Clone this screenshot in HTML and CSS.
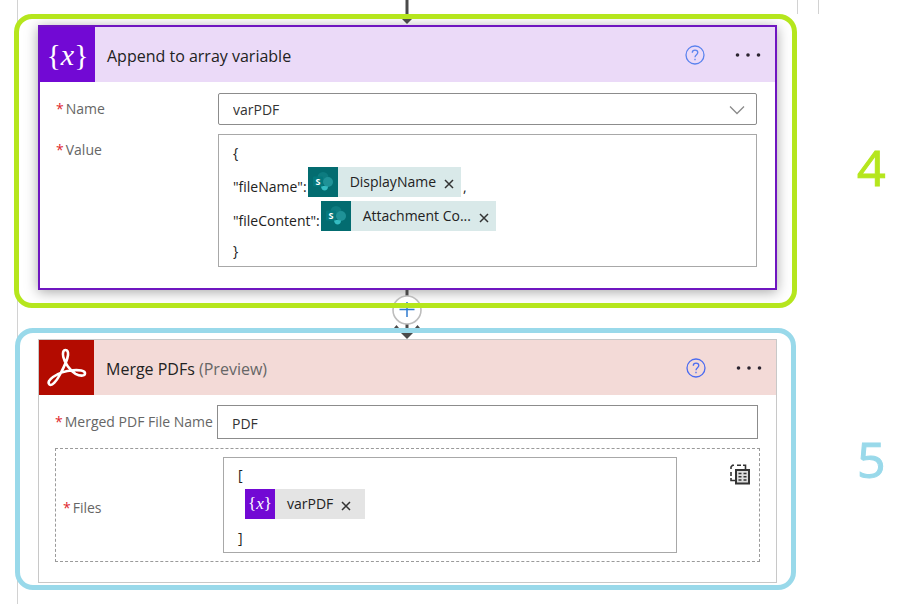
FILE: index.html
```html
<!DOCTYPE html>
<html lang="en">

<head>
    <meta charset="UTF-8">
    <meta name="viewport" content="width=device-width, initial-scale=1.0">
    <title>Flow steps</title>
    <link rel="stylesheet" href="styles.css">
</head>

<body>
    <main class="flow">
        <div class="connector top">
            <svg class="arrow" width="30" height="24" viewBox="0 0 30 24">
                <path d="M15 0V18" stroke="#4a4a4a" stroke-width="3" />
                <path d="M8 17H22L15 24Z" fill="#4a4a4a" />
            </svg>
            <div class="rails"></div>
        </div>

        <section class="step">
            <div class="frame green">
                <article class="card selected">
                    <header class="card-header purple">
                        <span class="tile variable">{<i>x</i>}</span>
                        <h2>Append to array variable</h2>
                        <button class="icon-btn" type="button" aria-label="Help">
                            <svg width="20" height="20" viewBox="0 0 20 20" fill="none" stroke="#5b83ee" stroke-width="1.3">
                                <circle cx="10" cy="10" r="9" />
                                <path d="M7.3 7.8C7.3 6.2 8.4 5.2 10 5.2S12.8 6.2 12.8 7.6C12.8 9.6 10 9.8 10 12.2" />
                                <path d="M10 13.8V15.3" />
                            </svg>
                        </button>
                        <button class="icon-btn" type="button" aria-label="More">
                            <svg width="26" height="20" viewBox="0 0 26 20" fill="#2b2430">
                                <circle cx="2.5" cy="10" r="1.8" />
                                <circle cx="13" cy="10" r="1.8" />
                                <circle cx="23.5" cy="10" r="1.8" />
                            </svg>
                        </button>
                    </header>
                    <div class="card-body">
                        <div class="field">
                            <label for="name"><span class="req">*</span>Name</label>
                            <div class="select-wrap">
                                <select id="name">
                                    <option>varPDF</option>
                                </select>
                                <svg class="chevron" width="16" height="10" viewBox="0 0 16 10" fill="none" stroke="#8a8a8a" stroke-width="1.3">
                                    <path d="M1 1.5L8 8.5L15 1.5" />
                                </svg>
                            </div>
                        </div>
                        <div class="field start">
                            <span class="label" id="value-label"><span class="req">*</span>Value</span>
                            <div class="editor" role="textbox" aria-multiline="true" aria-labelledby="value-label">
                                <div class="line">{</div>
                                <div class="line">"fileName":
                                    <span class="token teal">
                                        <svg class="token-icon" width="30" height="30" viewBox="0 0 30 30">
                                            <rect width="30" height="30" fill="#036c70" />
                                            <circle cx="15" cy="10.5" r="5.5" fill="#0d7c80" />
                                            <circle cx="20" cy="15" r="5" fill="#1f9297" />
                                            <path d="M13 19H17L20 19.500C20 22 18.500 23.500 16.500 23.500C15 23.500 13 22 13 19Z" fill="#35bcc2" />
                                            <rect x="5" y="9.5" width="10" height="10" rx="1" fill="#03787c" />
                                            <text x="10" y="18" class="s-mark">S</text>
                                        </svg>
                                        <span class="token-name">DisplayName</span>
                                        <button class="remove" type="button" aria-label="Remove DisplayName">
                                            <svg width="10" height="10" viewBox="0 0 10 10" stroke="#333" stroke-width="1.5"><path d="M1 1L9 9M9 1L1 9" /></svg>
                                        </button>
                                    </span>
                                    <span class="comma">,</span>
                                </div>
                                <div class="line">"fileContent":
                                    <span class="token teal">
                                        <svg class="token-icon" width="30" height="30" viewBox="0 0 30 30">
                                            <rect width="30" height="30" fill="#036c70" />
                                            <circle cx="15" cy="10.5" r="5.5" fill="#0d7c80" />
                                            <circle cx="20" cy="15" r="5" fill="#1f9297" />
                                            <path d="M13 19H17L20 19.500C20 22 18.500 23.500 16.500 23.500C15 23.500 13 22 13 19Z" fill="#35bcc2" />
                                            <rect x="5" y="9.5" width="10" height="10" rx="1" fill="#03787c" />
                                            <text x="10" y="18" class="s-mark">S</text>
                                        </svg>
                                        <span class="token-name">Attachment Co...</span>
                                        <button class="remove" type="button" aria-label="Remove Attachment Content">
                                            <svg width="10" height="10" viewBox="0 0 10 10" stroke="#333" stroke-width="1.5"><path d="M1 1L9 9M9 1L1 9" /></svg>
                                        </button>
                                    </span>
                                </div>
                                <div class="line last">}</div>
                            </div>
                        </div>
                    </div>
                </article>
            </div>
            <p class="number green-text">4</p>
        </section>

        <div class="connector middle">
            <button class="insert" type="button" aria-label="Insert a new step">
                <svg width="30" height="50" viewBox="0 0 30 50">
                    <path d="M15 0V42" stroke="#4a4a4a" stroke-width="3" />
                    <path d="M2 38L4.500 35L7 38ZM23 38L25.500 35L28 38Z" fill="#4a4a4a" />
                    <path d="M8 42H22L15 49Z" fill="#4a4a4a" />
                    <circle cx="15" cy="20" r="14" fill="#fff" stroke="#bdbdbd" stroke-width="1.6" />
                    <path d="M15 12V27M7.500 19.500H22.500" stroke="#2f7bd0" stroke-width="1.5" />
                </svg>
            </button>
        </div>

        <section class="step">
            <div class="frame blue">
                <article class="card">
                    <header class="card-header pink">
                        <span class="tile acrobat">
                            <svg width="41" height="41" viewBox="0 0 41 41" fill="none" stroke="#fff" stroke-width="2.6" stroke-linejoin="round">
                                <path d="M19.500 3C17 3 16.500 6.500 17.300 10C18.800 16.500 24 23.500 29.500 26.800C33.500 29 38.800 29.500 39 26.500C39.200 23.500 33 22.800 27 23.300C20 23.900 12 26.500 7 30C3 32.800 1.500 35.800 3.500 37.500C6 39.500 10.500 34 14 27.500C17.500 21 21.500 13 22 8C22.300 5 21.500 3 19.500 3Z" />
                            </svg>
                        </span>
                        <h2>Merge PDFs <span class="preview">(Preview)</span></h2>
                        <button class="icon-btn" type="button" aria-label="Help">
                            <svg width="20" height="20" viewBox="0 0 20 20" fill="none" stroke="#4b6bf0" stroke-width="1.3">
                                <circle cx="10" cy="10" r="9" />
                                <path d="M7.3 7.8C7.3 6.2 8.4 5.2 10 5.2S12.8 6.2 12.8 7.6C12.8 9.6 10 9.8 10 12.2" />
                                <path d="M10 13.8V15.3" />
                            </svg>
                        </button>
                        <button class="icon-btn" type="button" aria-label="More">
                            <svg width="26" height="20" viewBox="0 0 26 20" fill="#2b2430">
                                <circle cx="2.5" cy="10" r="1.8" />
                                <circle cx="13" cy="10" r="1.8" />
                                <circle cx="23.5" cy="10" r="1.8" />
                            </svg>
                        </button>
                    </header>
                    <div class="card-body compact">
                        <div class="field">
                            <label for="file-name"><span class="req">*</span>Merged PDF File Name</label>
                            <input id="file-name" type="text" value="PDF">
                        </div>
                        <div class="group">
                            <span class="label" id="files-label"><span class="req">*</span>Files</span>
                            <div class="editor" role="textbox" aria-multiline="true" aria-labelledby="files-label">
                                <div class="line">[</div>
                                <div class="line indent">
                                    <span class="token grey">
                                        <span class="token-icon variable">{<i>x</i>}</span>
                                        <span class="token-name">varPDF</span>
                                        <button class="remove" type="button" aria-label="Remove varPDF">
                                            <svg width="10" height="10" viewBox="0 0 10 10" stroke="#333" stroke-width="1.5"><path d="M1 1L9 9M9 1L1 9" /></svg>
                                        </button>
                                    </span>
                                </div>
                                <div class="line last">]</div>
                            </div>
                            <button class="icon-btn array-btn" type="button" aria-label="Switch to detail inputs">
                                <svg width="20" height="21" viewBox="0 0 20 21" fill="none" stroke="#333">
                                    <path d="M1 5V3L2.500 1.200H4M7 1.200H11M13 1.200H15.500V5M1 8V12M1 14V16.500H5" stroke-width="1.6" />
                                    <rect x="6" y="6" width="13" height="13.500" fill="#ddd" stroke-width="2" />
                                    <path d="M8.500 9.500H11.500M13.500 9.500H16.500M8.500 12.800H11.500M13.500 12.800H16.500M8.500 16H11.500M13.500 16H16.500" stroke-width="1.5" />
                                </svg>
                            </button>
                        </div>
                    </div>
                </article>
            </div>
            <p class="number blue-text">5</p>
        </section>
    </main>
</body>

</html>
```

FILE: styles.css
```css
* {
    box-sizing: border-box;
}

body {
    margin: 0;
    background-color: #fff;
    color: #333;
    font-family: "Open Sans", "Noto Sans", sans-serif;
    font-size: 14px;
    line-height: 20px;
}

button {
    padding: 0;
    border: none;
    background: none;
    cursor: pointer;
}

svg {
    display: block;
}

/* thin rail of the parent scope runs down the left side */
.flow {
    padding: 0 0 14px 14px;
    background: linear-gradient(#d2d2d2, #d2d2d2) 17px 0 / 1px 100% no-repeat;
}

.connector,
.step {
    display: grid;
    grid-template-columns: minmax(0, 1fr) 110px;
}

.connector {
    position: relative;
    z-index: 1;
    justify-items: center;
}

.top {
    height: 14px;
}

.middle {
    height: 20px;
}

.arrow {
    overflow: visible;
    margin-left: 3px;
}

.rails {
    justify-self: start;
    width: 22px;
    height: 14px;
    border: solid #d2d2d2;
    border-width: 0 1px;
}

.insert {
    height: 50px;
    margin: -18px 0 0 3px;
}

/* marker frames */
.frame {
    position: relative;
}

.frame::after {
    content: "";
    position: absolute;
    inset: 0;
    z-index: 2;
    border: 5px solid;
    border-radius: 18px;
    pointer-events: none;
}

.green {
    padding: 11px 20px 18px 24px;
}

.green::after {
    border-color: #b5e61d;
}

.blue {
    margin: 0 1px;
    padding: 11px 19px 7px 23px;
}

.blue::after {
    border-color: #99d9ea;
}

.number {
    margin: 0;
    align-self: center;
    padding-left: 60px;
    font-size: 50px;
    line-height: 50px;
    -webkit-text-stroke: 1px;
}

.green-text {
    padding-top: 12px;
    color: #b5e61d;
}

.blue-text {
    color: #99d9ea;
}

/* cards */
.card {
    border: 1px solid #c8c8c8;
    background-color: #fff;
}

.card.selected {
    border: 2px solid #6f16c0;
    box-shadow: 0 2px 12px rgba(0, 0, 0, 0.35);
}

.card-header {
    display: flex;
    align-items: center;
    gap: 30px;
    padding-right: 14px;
}

.purple {
    background-color: #ebdaf8;
}

.pink {
    background-color: #f3dad7;
}

.card-header h2 {
    flex: 1;
    margin: 0 0 0 -18px;
    padding-top: 2px;
    color: #222;
    font-size: 16px;
    font-weight: 400;
}

.preview {
    color: #666;
}

.tile {
    display: flex;
    align-items: center;
    justify-content: center;
    width: 55px;
    height: 55px;
}

.variable {
    background-color: #7209d4;
    color: #fff;
    font-family: "Liberation Serif", serif;
    font-size: 30px;
}

.acrobat {
    background-color: #b30b00;
}

.card-body {
    display: flex;
    flex-direction: column;
    gap: 9px;
    padding: 11px 16px 21px;
}

.card-body.compact {
    padding: 10px 16px 20px;
}

.field {
    display: flex;
    align-items: center;
    margin-right: 2px;
}

.field label,
.field .label {
    flex: none;
    width: 162px;
    white-space: nowrap;
}

.field.start {
    align-items: flex-start;
}

.start .label {
    padding-top: 6px;
}

label,
.label {
    color: #666;
}

.req {
    margin-right: 2px;
    color: #e0282e;
}

.select-wrap {
    position: relative;
    flex: 1;
}

.chevron {
    position: absolute;
    top: 12px;
    right: 12px;
    pointer-events: none;
}

select,
input {
    width: 100%;
    height: 32px;
    padding: 2px 14px 0;
    border: 1px solid #8c8c8c;
    background-color: #fff;
    color: #333;
    font: inherit;
    appearance: none;
}

select {
    border-radius: 2px;
}

input {
    flex: 1;
    height: 34px;
    min-width: 0;
}

.editor {
    flex: 1;
    display: flex;
    flex-direction: column;
    gap: 4px;
    padding: 8px 14px 5px;
    border: 1px solid #a8a8a8;
}

.line {
    display: flex;
    align-items: flex-end;
    color: #222;
}

.line.last {
    margin-top: 6px;
}

.line.indent {
    padding-left: 7px;
}

.token {
    display: flex;
    align-items: center;
    height: 30px;
    margin-left: 1px;
    padding-right: 7px;
}

.indent .token {
    margin-left: 0;
}

.teal {
    background-color: #d9e9e9;
}

.grey {
    padding-right: 14px;
    background-color: #e4e4e4;
}

.token-name {
    padding: 0 8px 0 12px;
}

.remove {
    padding-top: 3px;
}

.token-icon {
    display: flex;
    align-items: center;
    justify-content: center;
    width: 30px;
    height: 30px;
}

.token-icon.variable {
    font-size: 17px;
}

.s-mark {
    fill: #fff;
    font-size: 9px;
    font-weight: 700;
    text-anchor: middle;
}

.comma {
    margin-left: 2px;
}

.group {
    display: flex;
    align-items: center;
    padding: 8px 9px 8px 7px;
    border: 1px dashed #9a9a9a;
}

.group .editor {
    padding: 7px 14px 4px;
}

.group .line.last {
    margin-top: 5px;
}

.group .label {
    width: 160px;
    padding-top: 6px;
}

.array-btn {
    align-self: flex-start;
    margin: 7px 0 0 53px;
}
```
